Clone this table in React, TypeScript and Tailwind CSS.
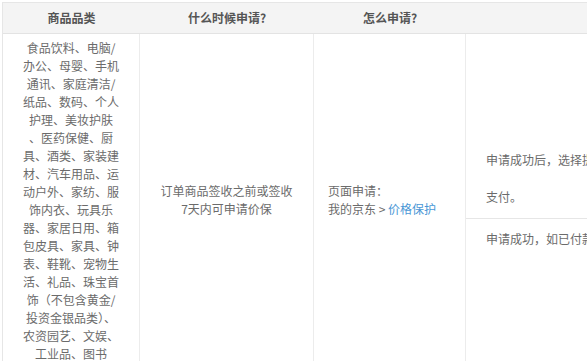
import React from 'react';

const categoryLines = [
    '食品饮料、电脑/',
    '办公、母婴、手机',
    '通讯、家庭清洁/',
    '纸品、数码、个人',
    '护理、美妆护肤',
    '、医药保健、厨',
    '具、酒类、家装建',
    '材、汽车用品、运',
    '动户外、家纺、服',
    '饰内衣、玩具乐',
    '器、家居日用、箱',
    '包皮具、家具、钟',
    '表、鞋靴、宠物生',
    '活、礼品、珠宝首',
    '饰（不包含黄金/',
    '投资金银品类）、',
    '农资园艺、文娱、',
    '工业品、图书',
];

export default function App() {
    return (
        <div
            className="w-[587px] h-[361px] overflow-hidden bg-white pt-[2px] pl-[2px] text-[12px] text-[#6b6b6b]"
            style={{ fontFamily: '"Noto Sans CJK SC", "Noto Sans", sans-serif' }}
        >
            <div className="w-[760px] flex flex-col border-l border-t border-[#e6e6e6]">
                {/* Header */}
                <div className="h-[31px] flex bg-[#f4f4f4] border-b border-[#e3e3e3] font-bold text-[#555] text-[12px]">
                    <div className="w-[137px] flex items-center justify-center">商品品类</div>
                    <div className="w-[174px] flex items-center justify-center">什么时候申请?</div>
                    <div className="w-[152px] flex items-center justify-center">怎么申请?</div>
                    <div className="flex-1" />
                </div>

                {/* Body */}
                <div className="flex">
                    <div className="w-[137px] border-r border-[#ececec] pt-[5px] pb-[5px] px-[10px] text-center leading-[18px]">
                        {categoryLines.map((line, i) => (
                            <div key={i}>{line}</div>
                        ))}
                    </div>

                    <div className="w-[174px] border-r border-[#ececec] flex flex-col items-center justify-center leading-[18px] pb-[2px]">
                        <div>订单商品签收之前或签收</div>
                        <div>7天内可申请价保</div>
                    </div>

                    <div className="w-[152px] border-r border-[#ececec] flex flex-col justify-center pl-[14px] leading-[18px] pb-[2px]">
                        <div>页面申请：</div>
                        <div>
                            我的京东 &gt; <span className="text-[#4a97d6]">价格保护</span>
                        </div>
                    </div>

                    <div className="flex-1 flex flex-col">
                        <div className="h-[185px] border-b border-[#e6e6e6] flex flex-col justify-end pl-[20px] pb-[12px] leading-[18px] whitespace-nowrap">
                            <div>申请成功后，选择提交退款方式</div>
                            <div className="mt-[19px]">支付。</div>
                        </div>
                        <div className="flex-1 pl-[20px] pt-[11px] leading-[18px] whitespace-nowrap">
                            申请成功，如已付款将退回
                        </div>
                    </div>
                </div>
            </div>
        </div>
    );
}
